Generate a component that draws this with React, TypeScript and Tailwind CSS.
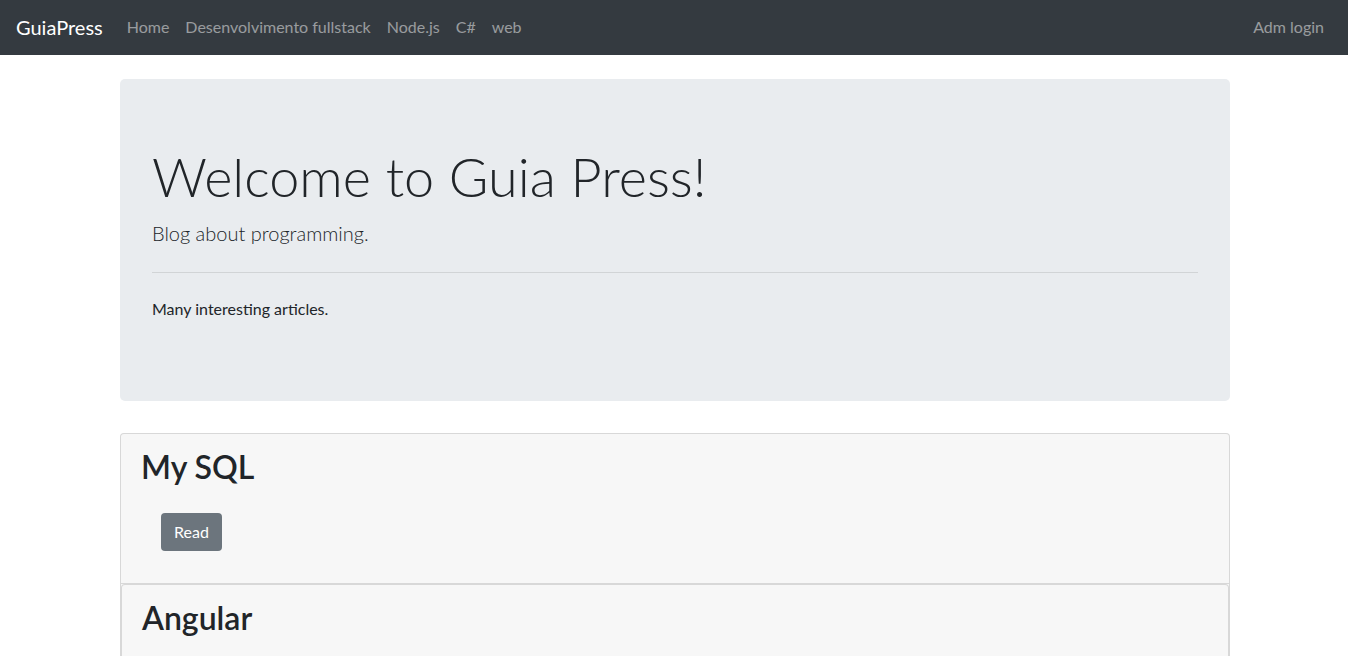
import React from "react";

const links = ["Home", "Desenvolvimento fullstack", "Node.js", "C#", "web"];

export default function App() {
  return (
    <div className="min-h-screen bg-white text-[#212529] font-['Lato','Noto_Sans',sans-serif] text-base leading-6">
      <nav className="flex items-center justify-between bg-[#343a40] px-4 h-[55px]">
        <div className="flex items-center -mt-[2px]">
          <a href="#" className="text-white text-xl leading-[30px] py-[5px] mr-4">
            GuiaPress
          </a>
          <ul className="flex">
            {links.map((l) => (
              <li key={l}>
                <a href="#" className="block px-2 py-2 text-white/50">
                  {l}
                </a>
              </li>
            ))}
          </ul>
        </div>
        <a href="#" className="block px-2 py-2 -mt-[2px] text-white/50">
          Adm login
        </a>
      </nav>

      <div className="mx-auto max-w-[1140px] pl-[16px] pr-[14px]">
        <div className="mt-6 rounded-[5px] bg-[#e9ecef] px-8 py-16">
          <h1 className="text-[54px] font-light leading-[67px] mb-2">
            Welcome to Guia Press!
          </h1>
          <p className="text-xl font-light leading-[30px] mb-4">
            Blog about programming.
          </p>
          <hr className="my-6 border-0 border-t border-black/10" />
          <p className="mb-4">Many interesting articles.</p>
        </div>

        <div className="mt-8 rounded-[4px] border border-black/[0.125] bg-[#f7f7f7]">
          <div className="px-5 pt-[14px] pb-8 border-b border-black/[0.125]">
            <h2 className="text-[32px] font-semibold leading-[1.2] mb-2">My SQL</h2>
            <div className="pl-5 pt-[19px]">
              <a
                href="#"
                className="inline-block rounded-[4px] bg-[#6c757d] px-[13px] py-[7px] text-white"
              >
                Read
              </a>
            </div>
          </div>
          <div className="rounded-[4px] border border-black/[0.125] bg-[#f7f7f7]">
            <div className="px-5 pt-[14px] pb-8">
              <h2 className="text-[32px] font-semibold leading-[1.2] mb-2">Angular</h2>
              <div className="pl-5 pt-[19px]">
                <a
                  href="#"
                  className="inline-block rounded-[4px] bg-[#6c757d] px-[13px] py-[7px] text-white"
                >
                  Read
                </a>
              </div>
            </div>
          </div>
        </div>
      </div>
    </div>
  );
}
